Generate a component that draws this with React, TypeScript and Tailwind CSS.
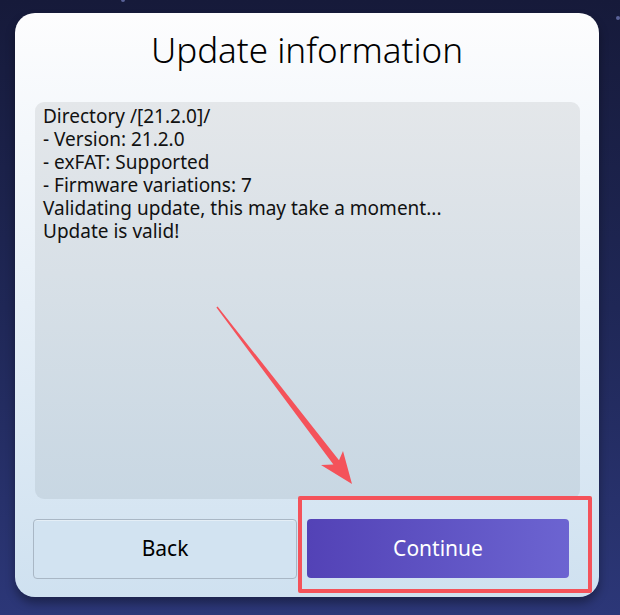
const lines = [
  "Directory /[21.2.0]/",
  "- Version: 21.2.0",
  "- exFAT: Supported",
  "- Firmware variations: 7",
  "Validating update, this may take a moment...",
  "Update is valid!",
];

const Arrow = () => (
  <svg className="absolute left-0 top-0 pointer-events-none" width="620" height="615" viewBox="0 0 620 615">
    <polygon
      points="352,484 343,451 339,460.3 217.6,306.5 216.4,307.5 333.4,464.5 321,465"
      fill="#f4525a"
    />
  </svg>
);

export default function App() {
  return (
    <div
      className="relative w-[620px] h-[615px] overflow-hidden bg-gradient-to-b from-[#161a3a] via-[#1f2756] to-[#2c3778] pt-[13px] pl-[15px]"
      style={{ fontFamily: '"Noto Sans", "Open Sans", sans-serif' }}
    >
      {/* faint stars */}
      <div className="absolute left-[121px] top-[-2px] w-[4px] h-[4px] rounded-full bg-[#5a6299]" />
      <div className="absolute left-[616px] top-[16px] w-[4px] h-[4px] rounded-full bg-[#5a6299]" />

      <div className="relative w-[584px] h-[584px] rounded-[20px] bg-gradient-to-b from-[#fdfdfe] to-[#cfe1f0] shadow-[0_6px_10px_rgba(0,0,0,0.35)] flex flex-col">
        <div className="h-[89px] flex items-center justify-center pb-[16px]">
          <h1 className="text-[35px] leading-none font-light text-black">Update information</h1>
        </div>

        <div className="ml-[20px] mr-[19px] h-[397px] rounded-[9px] bg-gradient-to-b from-[#e4e7ea] to-[#c8d7e3] px-[8px] pt-[3px]">
          {lines.map((l) => (
            <div key={l} className="text-[19px] leading-[23px] text-[#111]">
              {l}
            </div>
          ))}
        </div>

        <div className="mt-[20px] ml-[18px] flex gap-[10px]">
          <button className="w-[264px] h-[60px] rounded-[4px] border border-[#a9b7c5] bg-[#d2e3f1] text-[21px] text-black shadow-[inset_0_1px_0_rgba(255,255,255,0.4)]">
            Back
          </button>
          <button className="w-[262px] h-[59px] rounded-[4px] bg-gradient-to-r from-[#5342b6] to-[#6c64d1] text-[21px] text-white">
            Continue
          </button>
        </div>

        <div className="absolute left-[283px] top-[483px] w-[294px] h-[97px] border-[4px] border-[#f4525a] rounded-[2px]" />
      </div>

      <Arrow />
    </div>
  );
}
